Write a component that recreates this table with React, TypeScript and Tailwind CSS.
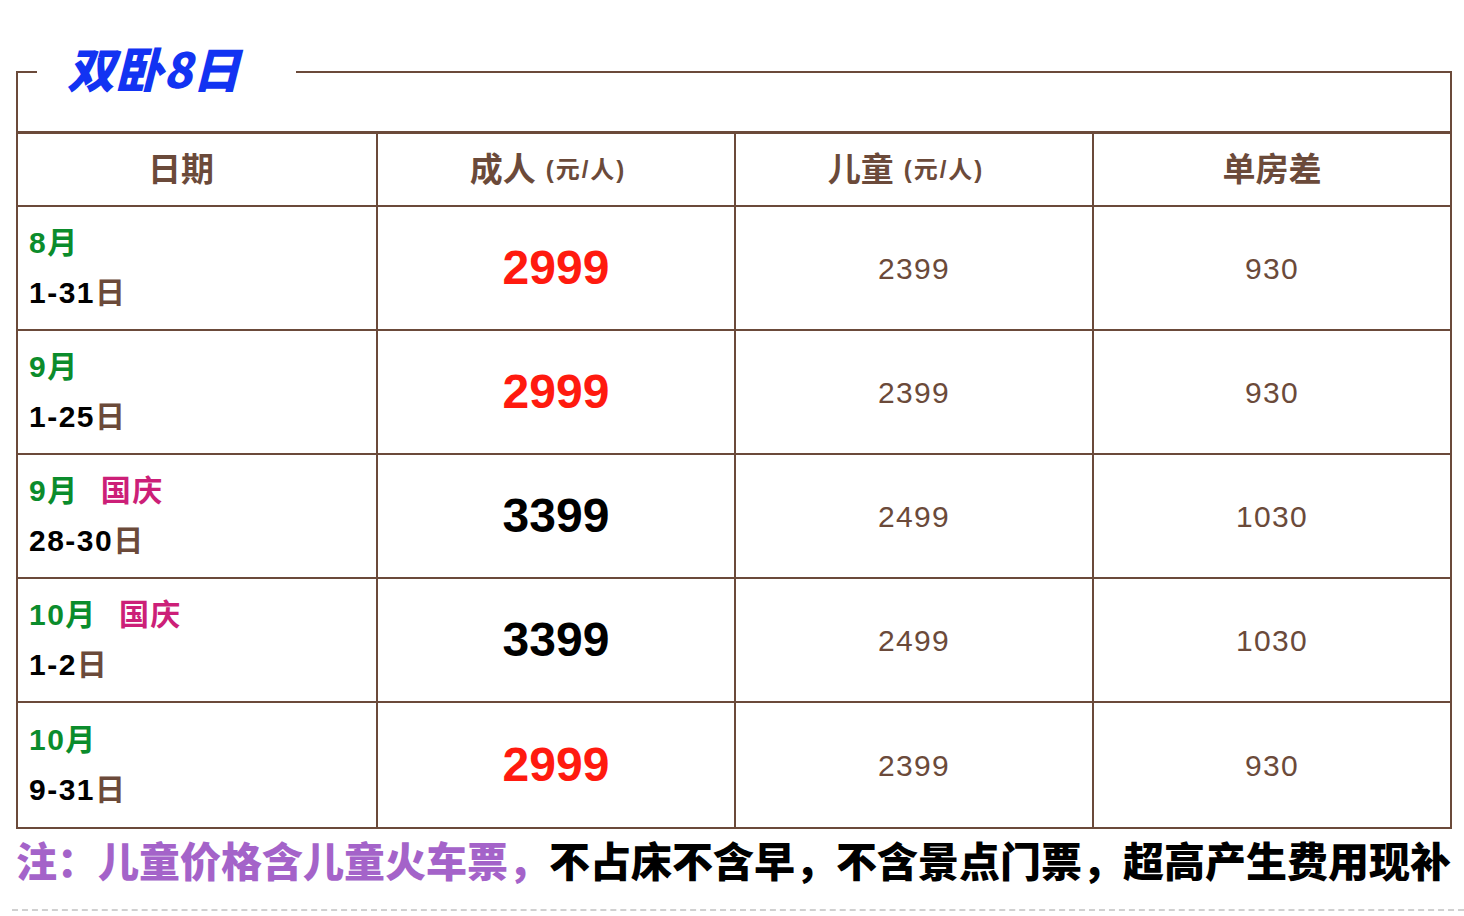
import React from "react";

const brown = "text-[#6b4a3a]";

type Row = {
  month: string;
  holiday?: string;
  days: string;
  adult: string;
  adultRed: boolean;
  child: string;
  single: string;
};

const rows: Row[] = [
  { month: "8月", days: "1-31", adult: "2999", adultRed: true, child: "2399", single: "930" },
  { month: "9月", days: "1-25", adult: "2999", adultRed: true, child: "2399", single: "930" },
  { month: "9月", holiday: "国庆", days: "28-30", adult: "3399", adultRed: false, child: "2499", single: "1030" },
  { month: "10月", holiday: "国庆", days: "1-2", adult: "3399", adultRed: false, child: "2499", single: "1030" },
  { month: "10月", days: "9-31", adult: "2999", adultRed: true, child: "2399", single: "930" },
];

export default function App() {
  return (
    <div
      className="w-[1464px] h-[916px] bg-white overflow-hidden"
      style={{ fontFamily: '"Liberation Sans", "Noto Sans CJK SC", sans-serif' }}
    >
      <div className="pl-[16px] pr-[12px] pt-[38px]">
        <fieldset className="border-2 border-[#6b4a3a] m-0 p-0 min-w-0">
          <legend className="ml-[19px] pl-[30px] pr-[56px] p-0">
            <span
              className="block italic font-black text-[48px] leading-[58px] pb-[10px] text-[#1233f2]"
              style={{ fontFamily: '"Noto Sans CJK SC", sans-serif' }}
            >
              双卧8日
            </span>
          </legend>
          <div className="mt-[25px] border-t-[3px] border-[#6b4a3a]">
            <div className="grid grid-cols-4 h-[73px] border-b-2 border-[#6b4a3a]">
              <div className={`flex items-center justify-center pr-[32px] font-bold text-[33px] ${brown}`}>
                日期
              </div>
              <div className={`flex items-center justify-center pr-[16px] border-l-2 border-[#6b4a3a] font-bold ${brown}`}>
                <span className="text-[33px]">成人</span>
                <span className="ml-[10px] text-[24px] tracking-[2px]">(元/人)</span>
              </div>
              <div className={`flex items-center justify-center pr-[16px] border-l-2 border-[#6b4a3a] font-bold ${brown}`}>
                <span className="text-[33px]">儿童</span>
                <span className="ml-[10px] text-[24px] tracking-[2px]">(元/人)</span>
              </div>
              <div className={`flex items-center justify-center border-l-2 border-[#6b4a3a] font-bold text-[33px] ${brown}`}>
                单房差
              </div>
            </div>
            {rows.map((r, i) => (
              <div
                key={i}
                className={`grid grid-cols-4 h-[124px] ${i < rows.length - 1 ? "border-b-2 border-[#6b4a3a]" : ""}`}
              >
                <div className="flex flex-col justify-center pl-[11px] font-bold text-[30px] leading-[50px] tracking-[1.5px]">
                  <div className="flex">
                    <span className="text-[#0b8c2c]">{r.month}</span>
                    {r.holiday && <span className="ml-[22px] text-[#cc1f78]">{r.holiday}</span>}
                  </div>
                  <div className="text-black">
                    {r.days}
                    <span className={brown}>日</span>
                  </div>
                </div>
                <div
                  className={`flex items-center justify-center border-l-2 border-[#6b4a3a] font-bold text-[48px] ${
                    r.adultRed ? "text-[#ff1a0f]" : "text-black"
                  }`}
                >
                  {r.adult}
                </div>
                <div className={`flex items-center justify-center border-l-2 border-[#6b4a3a] text-[30px] tracking-[1.3px] ${brown}`}>
                  {r.child}
                </div>
                <div className={`flex items-center justify-center border-l-2 border-[#6b4a3a] text-[30px] tracking-[1.3px] ${brown}`}>
                  {r.single}
                </div>
              </div>
            ))}
          </div>
        </fieldset>
        <div
          className="mt-[6px] whitespace-nowrap font-black text-[41px] leading-[48px]"
          style={{ fontFamily: '"Noto Sans CJK SC", sans-serif' }}
        >
          <span className="text-[#a463c9]">注：儿童价格含儿童火车票，</span>
          <span className="text-black">不占床不含早，不含景点门票，超高产生费用现补</span>
        </div>
      </div>
      <div className="ml-[12px] mt-[26px] border-t-2 border-dashed border-[#d0d0d0]" />
    </div>
  );
}
